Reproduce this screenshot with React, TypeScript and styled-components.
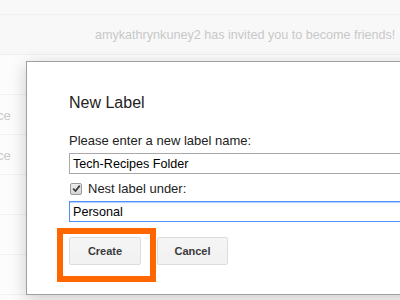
import styled, { createGlobalStyle } from "styled-components";

const GlobalStyle = createGlobalStyle`
  html, body {
    margin: 0;
    padding: 0;
    background: #fcfcfc;
    overflow: hidden;
  }
  body {
    font-family: "Liberation Sans", Arial, sans-serif;
  }
`;

// ---- faded page behind the modal ----

const Page = styled.div`
  position: relative;
  width: 400px;
  height: 300px;
  overflow: hidden;
`;

const List = styled.div`
  margin-top: -25px;
  display: flex;
  flex-direction: column;
`;

const Row = styled.div<{ $shade?: boolean }>`
  height: 39px;
  border-bottom: 1px solid ${(p) => (p.$shade ? "#efefef" : "#f1f1f1")};
  background: ${(p) => (p.$shade ? "#f8f8f8" : "#fcfcfc")};
  display: flex;
  align-items: center;
  white-space: nowrap;
  font-size: 13px;
  color: #c8c8c8;
`;

const Notice = styled.span<{ $lift?: number }>`
  padding-left: 95px;
  font-size: 12.6px;
  padding-top: 1px;
  margin-top: ${(p) => -(p.$lift ?? 0) * 2}px;
`;

const Clipped = styled.span`
  margin-left: -26px;
  padding-top: 2px;
`;

// ---- modal ----

const Dialog = styled.div`
  position: absolute;
  left: 26px;
  top: 61px;
  width: 460px;
  background: #fff;
  border: 1px solid #a0a0a0;
  box-shadow: 0 4px 16px rgba(0, 0, 0, 0.2);
  padding: 31px 0 29px 42px;
  color: #222;
`;

const Title = styled.div`
  font-size: 16px;
  line-height: 18px;
  padding-top: 1px;
  margin-bottom: -1px;
`;

const Prompt = styled.div`
  margin-top: 22px;
  font-size: 13px;
  line-height: 15px;
`;

const TextField = styled.div<{ $focused?: boolean }>`
  margin-top: 5px;
  height: 19px;
  border: 1px solid ${(p) => (p.$focused ? "#4d90fe" : "#a9a9a9")};
  box-shadow: ${(p) =>
    p.$focused ? "inset 0 1px 1px rgba(77, 144, 254, 0.45)" : "none"};
  padding-left: 3px;
  font-size: 12.6px;
  line-height: 20px;
  color: #000;
`;

const CheckRow = styled.div`
  margin-top: 7px;
  display: flex;
  align-items: center;
  gap: 6px;
  font-size: 13px;
  line-height: 15px;
`;

const CheckBox = styled.span`
  width: 10px;
  height: 10px;
  margin-left: 1px;
  border: 1px solid #9a9a9a;
  border-radius: 2px;
  background: linear-gradient(#ededed, #d6d6d6);
  display: flex;
  align-items: center;
  justify-content: center;
`;

const Buttons = styled.div`
  margin-top: 15px;
  display: flex;
  gap: 16px;
`;

const Highlight = styled.div`
  position: relative;
`;

const Marker = styled.div`
  position: absolute;
  left: -12px;
  top: -9px;
  right: -15px;
  bottom: -17px;
  border: 6px solid #ff6600;
  pointer-events: none;
`;

const Button = styled.div<{ $w: number }>`
  width: ${(p) => p.$w}px;
  height: 26px;
  border: 1px solid #dcdcdc;
  border-radius: 2px;
  background: linear-gradient(#f5f5f5, #f1f1f1);
  color: #3a3a3a;
  font-size: 11px;
  font-weight: bold;
  display: flex;
  align-items: center;
  justify-content: center;
`;

export default function App() {
  return (
    <Page>
      <GlobalStyle />
      <List>
        <Row $shade>
          <Notice $lift={2}>
            Kim has also approved the photos from Ella, and more
          </Notice>
        </Row>
        <Row $shade>
          <Notice>amykathrynkuney2 has invited you to become friends!</Notice>
        </Row>
        <Row />
        <Row>
          <Clipped>Notice</Clipped>
        </Row>
        <Row>
          <Clipped>Notice</Clipped>
        </Row>
        <Row />
        <Row />
        <Row />
      </List>

      <Dialog>
        <Title>New Label</Title>
        <Prompt>Please enter a new label name:</Prompt>
        <TextField>Tech-Recipes Folder</TextField>
        <CheckRow>
          <CheckBox>
            <svg width="9" height="9" viewBox="0 0 9 9">
              <path
                d="M1.2 4.6 L3.5 7 L7.8 1.6"
                fill="none"
                stroke="#3c3c3c"
                strokeWidth="1.8"
              />
            </svg>
          </CheckBox>
          Nest label under:
        </CheckRow>
        <TextField $focused>Personal</TextField>
        <Buttons>
          <Highlight>
            <Button $w={70}>Create</Button>
            <Marker />
          </Highlight>
          <Button $w={69}>Cancel</Button>
        </Buttons>
      </Dialog>
    </Page>
  );
}
